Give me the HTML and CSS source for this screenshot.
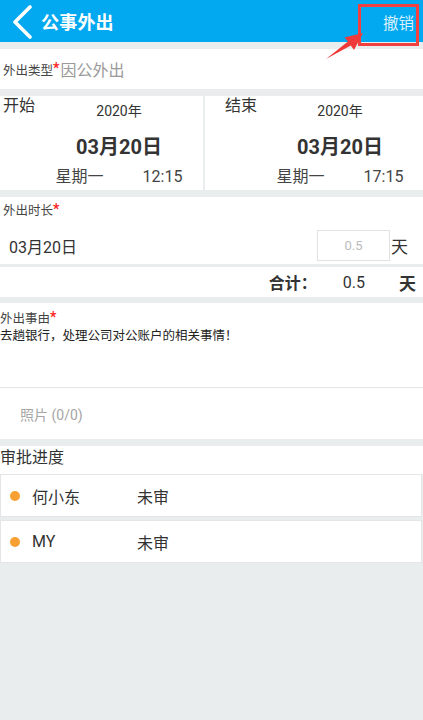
FILE: index.html
```html
<!DOCTYPE html>
<html lang="zh">
<head>
<meta charset="utf-8">
<link rel="stylesheet" href="styles.css">
</head>
<body>
<div class="page">
  <header class="topbar">
    <svg class="back" width="24" height="34" viewBox="0 0 24 34"><polyline points="19,2 4,17 19,32" fill="none" stroke="#fff" stroke-width="3.6" stroke-linecap="round" stroke-linejoin="round"/></svg>
    <div class="title">公事外出</div>
    <div class="cancel">撤销</div>
  </header>

  <section class="row-type">
    <span class="label">外出类型</span><span class="star">*</span><span class="type-val">因公外出</span>
  </section>

  <section class="dates">
    <div class="col col-start">
      <div class="col-label">开始</div>
      <div class="col-body">
        <div class="year">2020年</div>
        <div class="day">03月20日</div>
        <div class="week"><span>星期一</span><span>12:15</span></div>
      </div>
    </div>
    <div class="col col-end">
      <div class="col-label">结束</div>
      <div class="col-body">
        <div class="year">2020年</div>
        <div class="day">03月20日</div>
        <div class="week"><span>星期一</span><span>17:15</span></div>
      </div>
    </div>
  </section>

  <section class="dur">
    <div class="label-line"><span class="label">外出时长</span><span class="star">*</span></div>
    <div class="dur-row">
      <span class="dur-date">03月20日</span>
      <span class="dur-input">0.5</span>
      <span class="dur-unit">天</span>
    </div>
  </section>

  <section class="total">
    <span class="total-label">合计：</span>
    <span class="total-val">0.5</span>
    <span class="total-unit">天</span>
  </section>

  <section class="reason">
    <div class="label-line"><span class="label">外出事由</span><span class="star">*</span></div>
    <div class="reason-text">去趟银行，处理公司对公账户的相关事情！</div>
  </section>
  <section class="photo">照片 (0/0)</section>

  <section class="approve-title">审批进度</section>
  <div class="card"><span class="dot"></span><span class="name">何小东</span><span class="status">未审</span></div>
  <div class="card"><span class="dot"></span><span class="name">MY</span><span class="status">未审</span></div>

  <div class="highlight"></div>
  <svg class="arrow" width="60" height="40" viewBox="320 26 60 40"><polygon points="326,59 350.8,45.6 354,50 363,33 344.5,37.6 348,41.6" fill="#f03a3a"/></svg>
</div>
</body>
</html>
```

FILE: styles.css
```css
* { box-sizing: border-box; }
html, body { margin: 0; padding: 0; }
body {
  background: #e9eded;
  font-family: Roboto, "Noto Sans CJK SC", sans-serif;
  color: #333;
}
.page { position: relative; width: 423px; min-height: 720px; }

.topbar {
  height: 42px;
  background: #02a9f0;
  display: flex;
  align-items: center;
  color: #fff;
}
.back { margin-left: 11px; margin-top: 1px; }
.title {
  margin-left: 6px;
  font-size: 18px;
  font-weight: bold;
  letter-spacing: 0.2px;
}
.cancel {
  margin-left: auto;
  margin-right: 9px;
  font-size: 15.5px;
  color: #d9f1fc;
  margin-top: 1px;
}

.label { font-size: 12.5px; color: #444; }
.star { color: #f22; font-size: 14px; font-weight: bold; position: relative; top: -1px; }

.row-type {
  margin-top: 7px;
  height: 40px;
  background: #fff;
  display: flex;
  align-items: center;
  padding-left: 3px;
}
.type-val { font-size: 16px; color: #9a9a9a; margin-left: 1px; }

.dates {
  margin-top: 7px;
  height: 94px;
  display: flex;
  gap: 2px;
}
.col { background: #fff; display: flex; }
.col-start { width: 203px; padding-left: 3px; }
.col-end { flex: 1; padding-left: 20px; }
.col-label { font-size: 16px; line-height: 20px; color: #333; }
.col-body { flex: 1; display: flex; flex-direction: column; align-items: center; }
.year { margin-top: 5px; font-size: 14px; line-height: 20px; color: #333; }
.day { margin-top: 12px; font-size: 20px; font-weight: bold; line-height: 28px; color: #333; }
.week { margin-top: 5px; font-size: 16px; line-height: 22px; color: #444; display: flex; gap: 39px; }

.dur {
  margin-top: 7px;
  height: 67px;
  background: #fff;
  padding-top: 4px;
}
.label-line { padding-left: 3px; line-height: 18px; height: 18px; }
.dur-row {
  margin-top: 11px;
  height: 31px;
  display: flex;
  align-items: center;
  padding-right: 15px;
}
.dur-date { flex: 1; padding-left: 9px; font-size: 16px; color: #333; }
.dur-input {
  width: 73px;
  height: 31px;
  border: 1px solid #e2e2e2;
  display: flex;
  align-items: center;
  justify-content: center;
  font-size: 13px;
  color: #bbb;
}
.dur-unit { font-size: 17px; color: #333; margin-left: 1px; }

.total {
  margin-top: 3px;
  height: 30px;
  background: #fff;
  display: flex;
  align-items: center;
  justify-content: flex-end;
  padding-right: 7px;
  font-size: 16px;
  color: #333;
}
.total-label { font-weight: bold; }
.total-val { margin-left: 26px; }
.total-unit { margin-left: 34px; font-weight: bold; font-size: 17px; }

.reason {
  margin-top: 6px;
  height: 85px;
  background: #fff;
  border-bottom: 1px solid #e6e6e6;
  padding-top: 6px;
}
.reason .label-line { padding-left: 0; }
.reason .label { font-size: 12.5px; color: #444; }
.reason-text { font-size: 12.5px; line-height: 18px; color: #222; }

.photo {
  height: 51px;
  background: #fff;
  display: flex;
  align-items: center;
  padding-left: 20px;
  font-size: 14px;
  color: #a6a6a6;
}

.approve-title {
  margin-top: 7px;
  height: 28px;
  background: #fff;
  font-size: 16px;
  line-height: 24px;
  color: #333;
}
.card {
  height: 43px;
  margin: 0 1px 3px 0;
  background: #fff;
  border: 1px solid #e4e6e6;
  display: flex;
  align-items: center;
  font-size: 16px;
  color: #333;
}
.dot {
  width: 10px; height: 10px;
  border-radius: 50%;
  background: #f6a033;
  margin-left: 9px;
}
.name { margin-left: 12px; width: 105px; }
.status { }

.highlight {
  position: absolute;
  left: 358px; top: 4px;
  width: 61px; height: 42px;
  border: 3px solid #f04040;
}
.arrow { position: absolute; left: 320px; top: 26px; }
```
